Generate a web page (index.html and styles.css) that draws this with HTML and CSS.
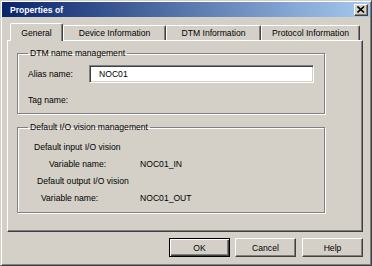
FILE: index.html
```html
<!DOCTYPE html>
<html lang="en">
<head>
  <meta charset="UTF-8"/>
  <title>Properties of</title>
  <link rel="stylesheet" href="styles.css">
</head>
<body>

<div class="dialog">

  <div class="titlebar">
    <span class="title">Properties of</span>
    <button class="close-btn" title="Close">
      <svg width="8" height="7" viewBox="0 0 8 7">
        <path d="M0.5 0.5 L7 6.5 M7 0.5 L0.5 6.5" stroke="#000" stroke-width="1.6" fill="none"/>
      </svg>
    </button>
  </div>

  <div class="tabs">
    <div class="tab active">General</div>
    <div class="tab tab-device">Device Information</div>
    <div class="tab tab-dtm">DTM Information</div>
    <div class="tab tab-protocol">Protocol Information</div>
  </div>

  <div class="panel">

    <!-- DTM name -->
    <fieldset class="group group-name">
      <legend>DTM name management</legend>
      <div class="row">
        <label class="row-label" for="alias">Alias name:</label>
        <input type="text" id="alias" value="NOC01">
      </div>
      <div class="row">
        <span class="row-label">Tag name:</span>
      </div>
    </fieldset>

    <!-- I/O vision -->
    <fieldset class="group group-io">
      <legend>Default I/O vision management</legend>
      <div class="io-row io-head-in">Default input I/O vision</div>
      <div class="io-row">
        <span class="io-label io-label-in">Variable name:</span>
        <span>NOC01_IN</span>
      </div>
      <div class="io-row io-head-out">Default output I/O vision</div>
      <div class="io-row">
        <span class="io-label io-label-out">Variable name:</span>
        <span>NOC01_OUT</span>
      </div>
    </fieldset>

  </div>

  <div class="footer">
    <button class="btn btn-default">OK</button>
    <button class="btn">Cancel</button>
    <button class="btn btn-help">Help</button>
  </div>

</div>

</body>
</html>
```

FILE: styles.css
```css
* {
  box-sizing: border-box;
}

body {
  margin: 0;
  padding: 0;
  font-family: 'Liberation Sans', Arial, sans-serif;
  font-size: 8.6px;
  color: #000;
  background: #d4d0c8;
}

.dialog {
  width: 372px;
  height: 266px;
  display: flex;
  flex-direction: column;
  padding: 1px;
  background: #d4d0c8;
  border: 1px solid;
  border-color: #d4d0c8 #404040 #404040 #d4d0c8;
  box-shadow: inset 1px 1px #fff, inset -1px -1px #808080;
}

.titlebar {
  height: 15px;
  display: flex;
  align-items: center;
  justify-content: space-between;
  padding: 0 2px 0 8px;
  background: linear-gradient(to right, #0a246a, #a6caf0);
  color: #fff;
}

.title {
  font-weight: bold;
}

.close-btn {
  width: 14px;
  height: 12px;
  padding: 0;
  display: flex;
  align-items: center;
  justify-content: center;
  background: #d4d0c8;
  border: 1px solid;
  border-color: #fff #404040 #404040 #fff;
  box-shadow: inset -1px -1px #808080;
}

.tabs {
  display: flex;
  align-items: flex-end;
  height: 17px;
  margin: 6px 0 0 8px;
}

.tab {
  height: 15px;
  line-height: 15px;
  text-align: center;
  border: 1px solid;
  border-bottom: none;
  border-color: #fff #404040 #fff #fff;
  border-radius: 2px 2px 0 0;
  box-shadow: inset -1px 0 #808080;
}

.tab.active {
  position: relative;
  z-index: 1;
  width: 53px;
  height: 18px;
  line-height: 19px;
  margin-bottom: -1px;
  background: #d4d0c8;
}

.tab-device {
  width: 103px;
}

.tab-dtm {
  width: 95px;
}

.tab-protocol {
  width: 99px;
}

.panel {
  height: 192px;
  margin: 0 7px 0 5px;
  padding: 0 9px;
  border: 1px solid;
  border-color: #fff #404040 #404040 #fff;
  box-shadow: inset -1px -1px #808080;
}

.group {
  margin: 7px 0 0;
  padding: 0 10px;
  width: 308px;
  border: 1px solid #808080;
  box-shadow: inset 1px 1px #fff, 1px 1px #fff;
}

.group legend {
  padding: 0 2px;
  line-height: 11px;
}

.group-name {
  padding-top: 6px;
  padding-bottom: 4px;
}

.group-io {
  margin-top: 8px;
  padding-top: 6px;
  padding-bottom: 5px;
}

.row {
  display: flex;
  align-items: center;
  height: 18px;
}

.row + .row {
  margin-top: 8px;
}

.row-label {
  width: 61px;
}

.row input {
  width: 225px;
  height: 18px;
  padding: 0 9px;
  font: inherit;
  background: #fff;
  border: 1px solid;
  border-color: #808080 #fff #fff #808080;
  box-shadow: inset 1px 1px #404040, inset -1px -1px #d4d0c8;
  outline: none;
}

.io-row {
  display: flex;
  height: 17px;
  line-height: 17px;
}

.io-head-in {
  padding-left: 6px;
}

.io-head-out {
  padding-left: 9px;
}

.io-label-in {
  width: 112px;
  padding-left: 21px;
}

.io-label-out {
  width: 112px;
  padding-left: 13px;
}

.footer {
  display: flex;
  justify-content: flex-end;
  gap: 5px;
  margin: 6px 7px 0 0;
}

.btn {
  width: 61px;
  height: 19px;
  padding: 0;
  font: inherit;
  color: #000;
  background: #d4d0c8;
  border: 1px solid;
  border-color: #fff #404040 #404040 #fff;
  box-shadow: inset -1px -1px #808080;
}

.btn-default {
  border-color: #000;
  box-shadow: inset 1px 1px #fff, inset -1px -1px #404040, inset -2px -2px #808080;
}

.btn-help {
  margin-left: 1px;
}
```
